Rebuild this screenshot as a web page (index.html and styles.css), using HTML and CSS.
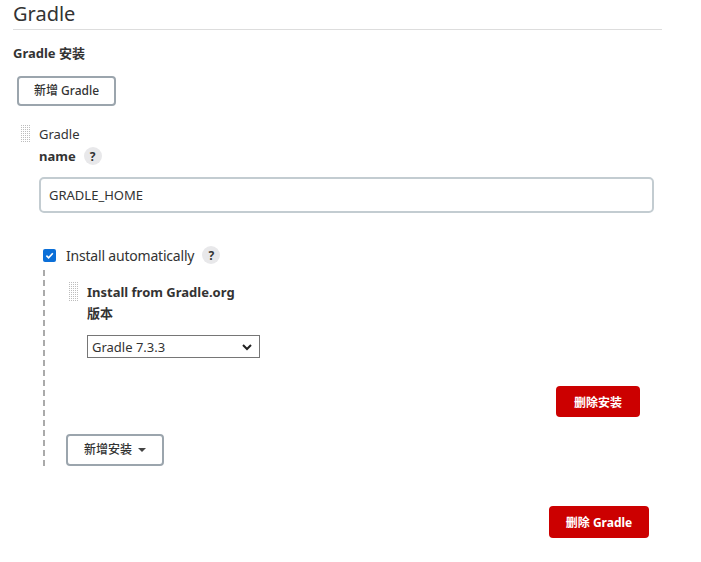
FILE: index.html
```html
<!DOCTYPE html>
<html lang="zh">
<head>
<meta charset="utf-8">
<link rel="stylesheet" href="styles.css">
</head>
<body>
<div class="page">
  <h1 class="title">Gradle</h1>
  <div class="section-title">Gradle 安装</div>
  <div class="add-row"><button class="btn">新增 Gradle</button></div>

  <div class="item">
    <div class="item-head"><span class="handle"></span><span class="item-name">Gradle</span></div>
    <div class="item-body">
      <div class="label-row"><span class="label">name</span><span class="help">?</span></div>
      <div class="input">GRADLE_HOME</div>

      <div class="check-row"><span class="checkbox"><svg width="12" height="12" viewBox="0 0 12 12"><path d="M2.6 6.2 L5 8.5 L9.6 3.6" fill="none" stroke="#fff" stroke-width="1.8"/></svg></span><span class="check-label">Install automatically</span><span class="help">?</span></div>

      <div class="nested">
        <div class="installer">
          <div class="item-head"><span class="handle tall"></span><span class="installer-name">Install from Gradle.org</span></div>
          <div class="installer-body">
            <div class="version-label">版本</div>
            <div class="select"><span>Gradle 7.3.3</span><svg width="12" height="8" viewBox="0 0 12 8"><path d="M2 2 L6 6 L10 2" fill="none" stroke="#222" stroke-width="2"/></svg></div>
            <div class="del-row"><button class="btn-red small">删除安装</button></div>
          </div>
        </div>
        <div class="add-inst-row"><button class="btn wide">新增安装 <span class="caret"></span></button></div>
      </div>
    </div>
    <div class="del-gradle-row"><button class="btn-red">删除 Gradle</button></div>
  </div>
</div>
</body>
</html>
```

FILE: styles.css
```css
* { box-sizing: border-box; }
body {
  margin: 0;
  font-family: "Noto Sans", "Noto Sans CJK SC", sans-serif;
  color: #333;
  background: #fff;
}
.page {
  width: 662px;
  padding-left: 13px;
}
.title {
  margin: 0;
  font-size: 20px;
  font-weight: 400;
  line-height: 28px;
  height: 30px;
  border-bottom: 1px solid #ddd;
  color: #333;
}
.section-title {
  margin-top: 14px;
  font-size: 13px;
  font-weight: 700;
  line-height: 18px;
}
.add-row { padding: 14px 0 0 4px; }
.btn {
  font-family: inherit;
  font-size: 12px;
  font-weight: 500;
  color: #333;
  background: #fff;
  border: 2px solid #9ba5ad;
  border-radius: 4px;
  height: 30px;
  padding: 0 15px;
  line-height: 1;
}
.btn.wide { height: 32px; padding: 0 16px; }
.caret {
  display: inline-block;
  width: 0; height: 0;
  border-left: 4px solid transparent;
  border-right: 4px solid transparent;
  border-top: 4px solid #444;
  vertical-align: middle;
  margin-left: 3px;
  margin-top: -2px;
}
.item { margin-top: 19px; }
.item-head { display: flex; align-items: flex-start; height: 20px; }
.handle {
  width: 10px; height: 18px;
  margin-left: 7px;
  margin-right: 9px;
  background: conic-gradient(#bdbdbd 25%, transparent 0) 0 0 / 2px 2px;
}
.handle.tall { height: 19px; margin-left: 0; margin-right: 9px; }
.item-name { font-size: 13px; line-height: 18px; }
.item-body { padding-left: 26px; }
.label-row { display: flex; align-items: center; height: 22px; margin-top: 0; }
.label { font-size: 13px; font-weight: 700; }
.help {
  display: inline-flex; align-items: center; justify-content: center;
  width: 18px; height: 18px; border-radius: 50%;
  background: #e8e8ea; color: #333;
  font-size: 12px; font-weight: 700;
  margin-left: 8px;
}
.input {
  margin-top: 10px;
  width: 615px; height: 36px;
  border: 2px solid #c3ccd1;
  border-radius: 5px;
  font-size: 13px;
  line-height: 32px;
  padding-left: 8px;
  color: #333;
}
.check-row { display: flex; align-items: center; height: 18px; margin-top: 33px; padding-left: 4px; }
.checkbox {
  width: 13px; height: 13px; border-radius: 2px;
  background: #0b6fd8;
  display: inline-flex; align-items: center; justify-content: center;
}
.checkbox svg { width: 11px; height: 11px; }
.check-label { font-size: 14px; margin-left: 10px; letter-spacing: -0.2px; }
.nested {
  margin-left: 4px;
  margin-top: 6px;
  border-left: 2px dashed #aaa;
  padding: 12px 0 0 23px;
  height: 196px;
}
.installer-name { font-size: 13px; font-weight: 700; line-height: 20px; }
.installer-body { padding-left: 19px; }
.version-label { font-size: 13px; font-weight: 700; line-height: 20px; margin-top: 1px; }
.select {
  margin-top: 12px;
  width: 173px; height: 23px;
  border: 1px solid #767676;
  display: flex; align-items: center; justify-content: space-between;
  padding: 0 6px 0 4px;
  font-size: 13px;
}
.del-row { display: flex; justify-content: flex-end; margin-top: 28px; width: 553px; }
.btn-red {
  font-family: inherit;
  font-size: 12px; font-weight: 700;
  color: #fff;
  background: #cc0000;
  border: none;
  border-radius: 4px;
  height: 32px;
  padding: 0 17px;
}
.btn-red.small { width: 84px; padding: 0; height: 31px; }
.add-inst-row { margin-top: 17px; margin-left: -2px; }
.del-gradle-row { display: flex; justify-content: flex-end; width: 636px; margin-top: 40px; }
.del-gradle-row .btn-red { width: 100px; padding: 0; }
```
